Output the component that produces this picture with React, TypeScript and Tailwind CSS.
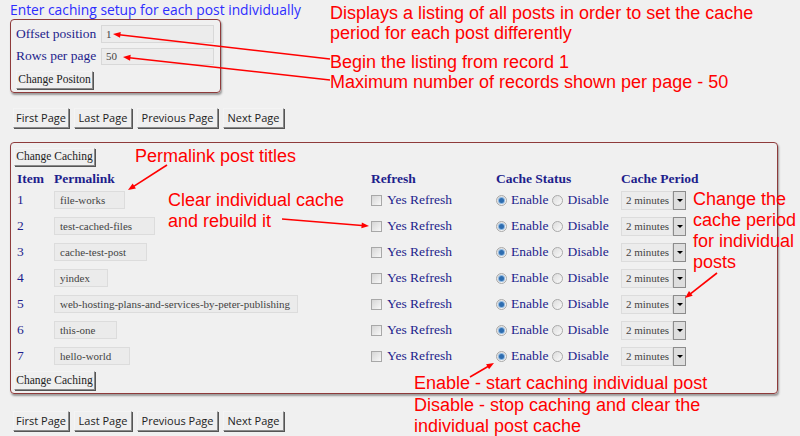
import React from "react";

const serif = "font-['Liberation_Serif','Times_New_Roman',serif]";
const sans = "font-['Open_Sans','Noto_Sans',sans-serif]";
const arial = "font-['Liberation_Sans',Arial,sans-serif]";

const posts = [
  { id: 1, slug: "file-works", w: "w-[71px]" },
  { id: 2, slug: "test-cached-files", w: "w-[101px]" },
  { id: 3, slug: "cache-test-post", w: "w-[93px]" },
  { id: 4, slug: "yindex", w: "w-[54px]" },
  { id: 5, slug: "web-hosting-plans-and-services-by-peter-publishing", w: "w-[244px]" },
  { id: 6, slug: "this-one", w: "w-[63px]" },
  { id: 7, slug: "hello-world", w: "w-[76px]" },
];

const pages = [
  { label: "First Page", w: "w-[56px]" },
  { label: "Last Page", w: "w-[58px]" },
  { label: "Previous Page", w: "w-[81px]" },
  { label: "Next Page", w: "w-[61px]" },
];

// arrow lines: [fromX, fromY, headX, headY]
const arrows: [number, number, number, number][] = [
  [330, 59, 113, 34],
  [330, 80, 123, 57],
  [167, 165, 128, 190],
  [282, 219, 369, 226],
  [717, 273, 685, 298],
  [470, 377, 494, 363],
];

const Arrow = ({ a }: { a: [number, number, number, number] }) => {
  const [x1, y1, x2, y2] = a;
  const ang = Math.atan2(y2 - y1, x2 - x1);
  const len = 8;
  const spread = 0.38;
  const p1 = [x2 - len * Math.cos(ang - spread), y2 - len * Math.sin(ang - spread)];
  const p2 = [x2 - len * Math.cos(ang + spread), y2 - len * Math.sin(ang + spread)];
  return (
    <g>
      <line x1={x1} y1={y1} x2={x2 - 4 * Math.cos(ang)} y2={y2 - 4 * Math.sin(ang)} stroke="#f00" strokeWidth="1.6" />
      <polygon points={`${x2},${y2} ${p1[0]},${p1[1]} ${p2[0]},${p2[1]}`} fill="#f00" />
    </g>
  );
};

const OldButton = ({ children, className = "" }: { children: React.ReactNode; className?: string }) => (
  <div
    className={`flex items-center justify-center whitespace-nowrap border border-t-[#f4f4f4] border-l-[#f4f4f4] border-b-[#8a8a8a] border-r-[#8a8a8a] bg-[#efefef] shadow-[1px_1px_0_#555] text-[#222] ${className}`}
  >
    {children}
  </div>
);

const Checkbox = () => (
  <span className="inline-block w-[11px] h-[11px] border border-[#a8a8a8] bg-gradient-to-br from-[#d6d6d6] to-[#f8f8f8]" />
);

const Radio = ({ on }: { on?: boolean }) => (
  <span className="inline-flex items-center justify-center w-[11px] h-[11px] rounded-full border border-[#a9a9a9] bg-gradient-to-br from-[#dcdcdc] to-[#fafafa]">
    {on && <span className="w-[5px] h-[5px] rounded-full bg-[#2e6db0] shadow-[0_0_0_1px_#8fb8e0]" />}
  </span>
);

const Select = () => (
  <div className="flex h-[19px]">
    <div className={`w-[52px] flex items-center pl-[4px] border border-[#dcdcdc] bg-[#ececec] text-[11px] text-[#444] whitespace-nowrap ${serif}`}>
      2 minutes
    </div>
    <div className="w-[13px] flex items-center justify-center border border-[#8c8c8c] bg-[#dedede]">
      <span className="w-0 h-0 border-l-[3px] border-r-[3px] border-t-[3px] border-l-transparent border-r-transparent border-t-black" />
    </div>
  </div>
);

const Pager = () => (
  <div className="flex gap-[5px] pl-[13px] h-[20px]">
    {pages.map((p) => (
      <OldButton key={p.label} className={`${p.w} h-[20px] text-[11px] ${sans}`}>
        {p.label}
      </OldButton>
    ))}
  </div>
);

const App = () => {
  return (
    <div className="relative w-[800px] h-[436px] overflow-hidden bg-[#f0f0f0]">
      {/* page content */}
      <div className="flex flex-col pl-[10px]">
        <div className={`h-[19px] pt-[1px] text-[13.8px] leading-[17px] text-[#2d2dff] whitespace-nowrap ${sans}`}>
          Enter caching setup for each post individually
        </div>

        {/* position box */}
        <div className="w-[211px] h-[74px] border border-[#8e3b3b] rounded-[4px] shadow-[1px_2px_2px_#9a9a9a] pt-[5px] pl-[5px] flex flex-col">
          <div className="flex items-center h-[18px]">
            <span className={`w-[85px] text-[13.5px] text-[#1e1e8c] whitespace-nowrap ${serif}`}>Offset position</span>
            <div className={`w-[113px] h-[18px] border border-[#d8d8d8] bg-[#ececec] pl-[4px] flex items-center text-[11px] text-[#444] ${serif}`}>1</div>
          </div>
          <div className="flex items-center h-[17px] mt-[5px]">
            <span className={`w-[85px] text-[13.5px] text-[#1e1e8c] whitespace-nowrap ${serif}`}>Rows per page</span>
            <div className={`w-[113px] h-[17px] border border-[#d8d8d8] bg-[#ececec] pl-[4px] flex items-center text-[11px] text-[#444] ${serif}`}>50</div>
          </div>
          <OldButton className={`mt-[6px] w-[77px] h-[18px] text-[11.5px] ${serif}`}>Change Positon</OldButton>
        </div>

        <div className="h-[15px]" />
        <div className="-ml-[10px]">
          <Pager />
        </div>
        <div className="h-[14px]" />

        {/* caching box */}
        <div className="w-[768px] h-[252px] border border-[#8e3b3b] rounded-[4px] shadow-[1px_2px_2px_#9a9a9a] pt-[5px] pl-[3px] flex flex-col">
          <OldButton className={`w-[81px] h-[18px] text-[11.5px] ${serif}`}>Change Caching</OldButton>
          <div className={`grid grid-cols-[37px_317px_125px_125px_1fr] items-end h-[21px] pl-[3px] text-[13.5px] font-bold text-[#1e1e8c] leading-[16px] whitespace-nowrap ${serif}`}>
            <span>Item</span>
            <span>Permalink</span>
            <span>Refresh</span>
            <span>Cache Status</span>
            <span>Cache Period</span>
          </div>
          {posts.map((p) => (
            <div
              key={p.id}
              className={`grid grid-cols-[37px_317px_125px_125px_1fr] items-center h-[26px] pl-[3px] text-[13.5px] text-[#1e1e8c] whitespace-nowrap ${serif}`}
            >
              <span>{p.id}</span>
              <div className={`${p.w} h-[18px] flex items-center pl-[5px] border border-[#dcdcdc] bg-[#ebebeb] text-[11px] text-[#444]`}>
                {p.slug}
              </div>
              <div className="flex items-center gap-[5px]">
                <Checkbox />
                <span>Yes Refresh</span>
              </div>
              <div className="flex items-center gap-[4px]">
                <Radio on />
                <span>Enable</span>
                <Radio />
                <span>Disable</span>
              </div>
              <Select />
            </div>
          ))}
          <OldButton className={`mt-[2px] w-[81px] h-[19px] text-[11.5px] ${serif}`}>Change Caching</OldButton>
        </div>

        <div className="h-[17px]" />
        <div className="-ml-[10px]">
          <Pager />
        </div>
      </div>

      {/* annotations */}
      <div className={`absolute left-[330px] top-[3px] text-[18px] leading-[20px] text-[#f00] whitespace-nowrap ${arial}`}>
        Displays a listing of all posts in order to set the cache
        <br />
        period for each post differently
      </div>
      <div className={`absolute left-[330px] top-[52px] text-[18px] leading-[20px] text-[#f00] whitespace-nowrap ${arial}`}>
        Begin the listing from record 1
        <br />
        Maximum number of records shown per page - 50
      </div>
      <div className={`absolute left-[135px] top-[146px] text-[18px] leading-[20px] text-[#f00] whitespace-nowrap ${arial}`}>
        Permalink post titles
      </div>
      <div className={`absolute left-[168px] top-[190px] text-[18px] leading-[21px] text-[#f00] whitespace-nowrap ${arial}`}>
        Clear individual cache
        <br />
        and rebuild it
      </div>
      <div className={`absolute left-[693px] top-[189px] text-[18px] leading-[21px] text-[#f00] whitespace-nowrap ${arial}`}>
        Change the
        <br />
        cache period
        <br />
        for individual
        <br />
        posts
      </div>
      <div className={`absolute left-[414px] top-[373px] text-[18px] leading-[21.5px] text-[#f00] whitespace-nowrap ${arial}`}>
        Enable - start caching individual post
        <br />
        Disable - stop caching and clear the
        <br />
        individual post cache
      </div>

      <svg className="absolute inset-0 pointer-events-none" width="800" height="436">
        {arrows.map((a, i) => (
          <Arrow key={i} a={a} />
        ))}
      </svg>
    </div>
  );
};

export default App;
